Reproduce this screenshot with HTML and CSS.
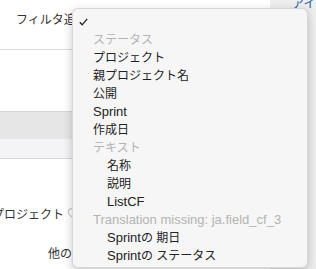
FILE: index.html
```html
<!DOCTYPE html>
<html>
<head>
    <meta charset="UTF-8">
    <meta name="viewport" content="width=device-width, initial-scale=1.0">
    <title>フィルタ</title>
    <link rel="stylesheet" href="styles.css">
</head>
<body>
    <div id="page">
        <div id="content">
            <div class="filterRow">フィルタ追加</div>
            <div class="listTable">
                <div class="listHead"></div>
                <div class="listRow"></div>
            </div>
            <div class="fieldRow">
                <span class="fieldLabel">プロジェクト</span>
                <svg class="fieldIcon" width="8" height="9" viewBox="0 0 8 9">
                    <path d="M4 0.5 L7.5 1.8 V4.5 C7.5 6.6 5.8 7.9 4 8.5 C2.2 7.9 0.5 6.6 0.5 4.5 V1.8 Z" fill="none" stroke="#b8b8b8" stroke-width="1"/>
                </svg>
            </div>
            <div class="otherRow">他の項目</div>
        </div>
        <div id="sidebar">
            <a class="sideLink">アイコン</a>
        </div>
    </div>

    <div id="dropdown">
        <div class="option selected">
            <svg class="check" width="9" height="8" viewBox="0 0 9 8">
                <path d="M0.8 4.2 L3.2 6.8 L8.2 0.8" fill="none" stroke="#222" stroke-width="1.3"/>
            </svg>
        </div>
        <div class="option group"><span class="ja">ステータス</span></div>
        <div class="option"><span class="ja">プロジェクト</span></div>
        <div class="option"><span class="ja">親プロジェクト名</span></div>
        <div class="option"><span class="ja">公開</span></div>
        <div class="option">Sprint</div>
        <div class="option"><span class="ja">作成日</span></div>
        <div class="option group"><span class="ja">テキスト</span></div>
        <div class="option sub"><span class="ja">名称</span></div>
        <div class="option sub"><span class="ja">説明</span></div>
        <div class="option sub">ListCF</div>
        <div class="option group">Translation missing: ja.field_cf_3</div>
        <div class="option sub">Sprint<span class="ja">の 期日</span></div>
        <div class="option sub">Sprint<span class="ja">の ステータス</span></div>
    </div>
</body>
</html>
```

FILE: styles.css
```css
body {
    margin: 0;
    padding: 0;
    width: 316px;
    height: 269px;
    overflow: hidden;
    font-family: "Liberation Sans", "Noto Sans CJK JP", sans-serif;
    font-size: 13px;
    color: #333;
    background-color: white;
}

.ja {
    font-size: 12px;
}

#page {
    display: flex;
    height: 269px;
}

#content {
    width: 270px;
    font-size: 12px;
}

#sidebar {
    flex: 1;
    background-color: #eeeeee;
    overflow: hidden;
    white-space: nowrap;
}

.sideLink {
    display: block;
    margin: -4px 0 0 22px;
    line-height: 16px;
    font-size: 12px;
    color: #1f62a8;
}

.filterRow {
    height: 50px;
    padding-left: 16px;
    line-height: 40px;
    border-bottom: 1px solid #dcdcdc;
    box-sizing: border-box;
    margin-bottom: 61px;
    white-space: nowrap;
}

.listHead {
    height: 27px;
    background-color: #e6e6e6;
    border-top: 1px solid #d6d6d6;
}

.listRow {
    height: 19px;
    background-color: #f4f4f6;
    border-bottom: 1px solid #d8d8d8;
}

.fieldRow {
    display: flex;
    align-items: center;
    margin-top: 45px;
    height: 18px;
}

.fieldLabel {
    width: 64px;
    text-align: right;
    white-space: nowrap;
    overflow: visible;
    direction: rtl;
}

.fieldIcon {
    margin-left: 4px;
    margin-top: -2px;
}

.otherRow {
    margin: 23px 0 0 48px;
    line-height: 18px;
    white-space: nowrap;
}

#dropdown {
    position: absolute;
    left: 72px;
    top: 8px;
    width: 236px;
    padding: 4px 0 2px;
    box-sizing: border-box;
    background-color: #f6f6f6;
    border: 1px solid rgba(0, 0, 0, 0.13);
    border-radius: 6px;
    box-shadow: 0 3px 10px rgba(0, 0, 0, 0.22);
    color: #222;
}

.option {
    position: relative;
    height: 18px;
    line-height: 18px;
    padding-left: 20px;
    white-space: nowrap;
}

.option.group {
    color: #b3b3b3;
}

.option.sub {
    padding-left: 34px;
}

.check {
    position: absolute;
    left: 6px;
    top: 5px;
}
```
